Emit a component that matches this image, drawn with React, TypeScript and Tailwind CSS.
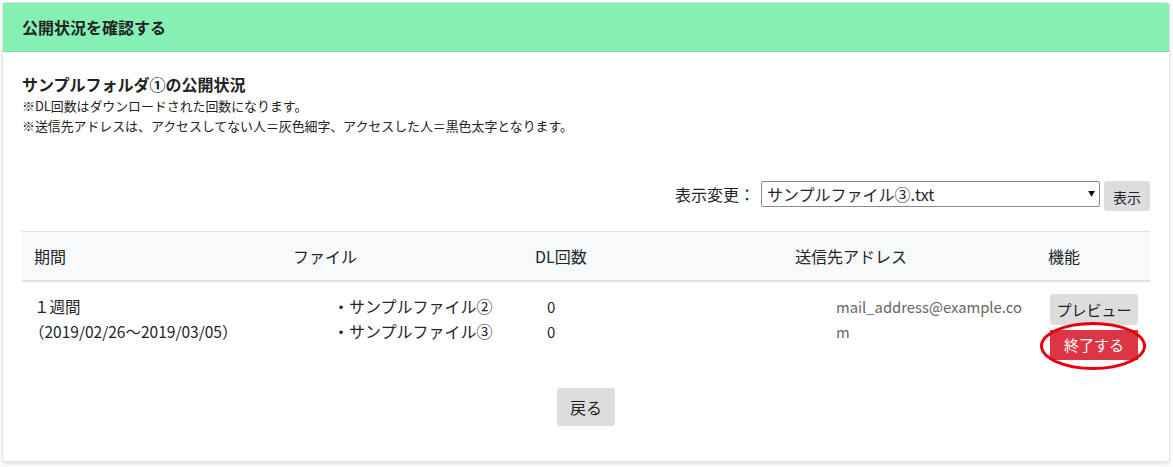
import React from "react";

export default function App() {
  return (
    <div
      className="w-[1173px] h-[467px] bg-white pl-[2px] pr-[3px] pt-[2px] text-[#212529]"
      style={{ fontFamily: '"Noto Sans CJK JP", "Noto Sans", sans-serif' }}
    >
      <div className="h-[460px] border border-[#e3e3e3] rounded-[3px] shadow-[0_2px_4px_rgba(0,0,0,0.12)] bg-white overflow-hidden">
        <div className="h-[49px] bg-[#86f0b4] border-b border-[#7bdca6] flex items-center px-[19px]">
          <h1 className="text-[16px] font-bold text-[#222]">公開状況を確認する</h1>
        </div>
        <div className="px-[19px] pt-[20px]">
          <h2 className="text-[16px] font-bold leading-[24px] text-[#222]">サンプルフォルダ①の公開状況</h2>
          <p className="text-[12.9px] leading-[20px] text-[#222]">
            ※DL回数はダウンロードされた回数になります。
            <br />
            ※送信先アドレスは、アクセスしてない人＝灰色細字、アクセスした人＝黒色太字となります。
          </p>

          <div className="mt-[45px] flex justify-end items-start h-[30px]">
            <span className="text-[16px] leading-[26px] mr-[6px]">表示変更：</span>
            <div className="relative w-[339px] h-[26px]">
              <select
                className="appearance-none w-full h-full border border-[#8a8a8a] rounded-[2px] bg-white pl-[5px] text-[16px] leading-[24px] outline-none"
                style={{ fontFamily: '"Noto Sans CJK JP", "Noto Sans", sans-serif' }}
                defaultValue="3"
              >
                <option value="3">サンプルファイル③.txt</option>
              </select>
              <span className="pointer-events-none absolute right-[5px] top-[8px] text-[7px] leading-[8px] text-black">▼</span>
            </div>
            <button className="ml-[4px] w-[46px] h-[30px] bg-[#dddddd] rounded-[3px] text-[14px] pt-[3px]">表示</button>
          </div>

          <table className="mt-[20px] w-[1128px] border-collapse table-fixed text-[16px]">
            <colgroup>
              <col className="w-[259px]" />
              <col className="w-[242px]" />
              <col className="w-[260px]" />
              <col className="w-[253px]" />
              <col className="w-[114px]" />
            </colgroup>
            <thead>
              <tr className="bg-[#f8f9fa] border-t border-[#dee2e6] border-b-2">
                <th className="text-left font-normal px-[12px] py-[12px] leading-[24px]">期間</th>
                <th className="text-left font-normal px-[12px] py-[12px] leading-[24px]">ファイル</th>
                <th className="text-left font-normal px-[12px] py-[12px] leading-[24px]">DL回数</th>
                <th className="text-left font-normal px-[12px] py-[12px] leading-[24px]">送信先アドレス</th>
                <th className="text-left font-normal px-[12px] py-[12px] leading-[24px]">機能</th>
              </tr>
            </thead>
            <tbody>
              <tr>
                <td className="align-top px-[12px] pt-[12px] pb-[12px] leading-[25px] text-[15.5px]">
                  <div>１週間</div>
                  <div className="-ml-[5px]">（2019/02/26〜2019/03/05）</div>
                </td>
                <td className="align-top px-[12px] pt-[12px] leading-[25px]">
                  <ul className="pl-[40px]">
                    <li>・サンプルファイル②</li>
                    <li>・サンプルファイル③</li>
                  </ul>
                </td>
                <td className="align-top px-[12px] pt-[12px] leading-[25px] text-[15px]">
                  <ul className="pl-[12px]">
                    <li>0</li>
                    <li>0</li>
                  </ul>
                </td>
                <td className="align-top px-[12px] pt-[12px] leading-[25px]">
                  <ul className="pl-[41px]">
                    <li className="w-[189px] break-all text-[14.8px] text-[#666]">mail_address@example.com</li>
                  </ul>
                </td>
                <td className="align-top pl-[14px] pr-[12px] pt-[12px] pb-[12px]">
                  <div className="flex flex-col gap-[5px] w-[88px]">
                    <button className="h-[31px] bg-[#dddddd] rounded-[3px] text-[15px] leading-[31px] text-[#222]">プレビュー</button>
                    <div className="relative">
                      <button className="w-full h-[30px] bg-[#dc3545] text-white text-[15px] leading-[30px]">終了する</button>
                      <div className="absolute left-[-10px] top-[-8px] w-[106px] h-[48px] rounded-[50%] border-[3px] border-[#e8000b] pointer-events-none" />
                    </div>
                  </div>
                </td>
              </tr>
            </tbody>
          </table>

          <div className="mt-[16px] flex justify-center w-[1128px]">
            <button className="w-[58px] h-[38px] bg-[#dddddd] rounded-[3px] text-[16px]">戻る</button>
          </div>
        </div>
      </div>
    </div>
  );
}
